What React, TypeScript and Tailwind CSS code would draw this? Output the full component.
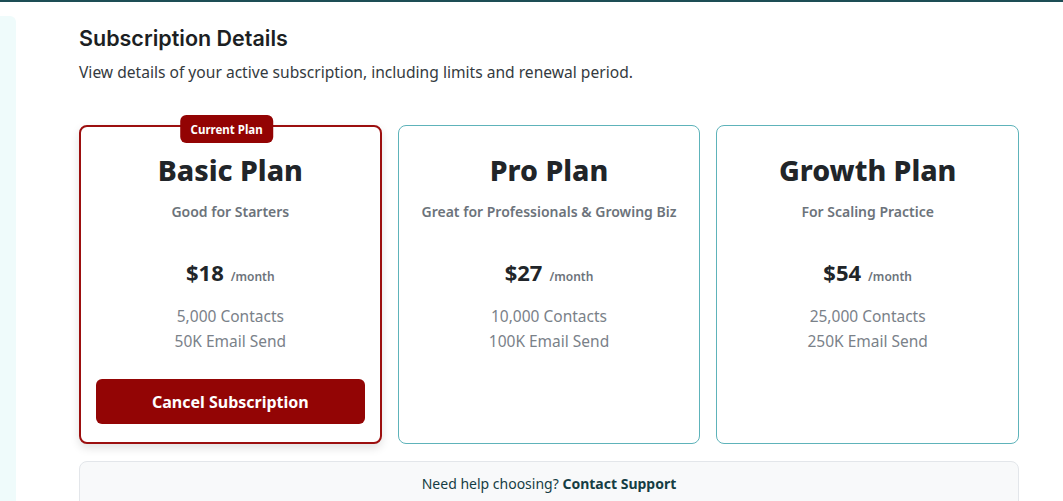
import React from "react";

interface Plan {
  name: string;
  tagline: string;
  price: number;
  contacts: string;
  emails: string;
  current?: boolean;
}

const plans: Plan[] = [
  { name: "Basic Plan", tagline: "Good for Starters", price: 18, contacts: "5,000 Contacts", emails: "50K Email Send", current: true },
  { name: "Pro Plan", tagline: "Great for Professionals & Growing Biz", price: 27, contacts: "10,000 Contacts", emails: "100K Email Send" },
  { name: "Growth Plan", tagline: "For Scaling Practice", price: 54, contacts: "25,000 Contacts", emails: "250K Email Send" },
];

const PlanCard: React.FC<{ plan: Plan }> = ({ plan }) => {
  return (
    <div
      className={
        plan.current
          ? "relative flex flex-col items-center rounded-lg border-2 border-[#9c0f0f] bg-white px-[15px] pt-[25px] pb-[18px] shadow-[0_4px_10px_rgba(0,0,0,0.12)]"
          : "relative flex flex-col items-center rounded-lg border border-[#5eb3ba] bg-white px-4 pt-[26px] pb-5"
      }
    >
      {/* badge sits on the top border */}
      {plan.current && (
        <span className="absolute -top-[12px] left-1/2 -translate-x-[54%] rounded-md bg-[#930303] px-[10px] h-[28px] leading-[29px] text-[11.5px] font-bold text-white">
          Current Plan
        </span>
      )}
      <h3 className="text-[28.5px] leading-9 font-extrabold text-[#212529]">{plan.name}</h3>
      <p className="mt-[14px] text-[14px] leading-5 font-semibold text-[#6c737b]">{plan.tagline}</p>
      <div className="mt-[34px] flex items-baseline gap-[7px] leading-8">
        <span className="text-[22px] font-bold text-[#212529]">${plan.price}</span>
        <span className="text-[12px] font-semibold text-[#6c737b]">/month</span>
      </div>
      <div className="mt-[11px] text-center text-[15.5px] leading-[25px] text-[#7a8189]">
        <div>{plan.contacts}</div>
        <div>{plan.emails}</div>
      </div>
      {plan.current && (
        <button
          type="button"
          className="mt-[25px] h-[45px] w-full rounded-md bg-[#930505] text-[16px] font-bold text-white"
        >
          Cancel Subscription
        </button>
      )}
    </div>
  );
};

export default function App() {
  return (
    <div className="min-h-[501px] bg-white font-['Noto_Sans','Open_Sans',sans-serif]">
      <div className="h-[2px] bg-[#1d4d55]" />
      <div className="flex">
        <div className="mt-[14px] w-4 h-[500px] shrink-0 rounded-tr-md bg-[#effbfb]" />
        <main className="flex-1 pl-[63px] pr-11 pt-[22px]">
          <h2 className="font-['Inter',sans-serif] text-[21.5px] leading-7 font-semibold text-[#1c1f23]">
            Subscription Details
          </h2>
          <p className="mt-[9px] text-[15.6px] leading-[22px] text-[#343a40]">
            View details of your active subscription, including limits and renewal period.
          </p>
          <div className="mt-[42px] grid grid-cols-3 gap-4">
            {plans.map(plan => (
              <PlanCard key={plan.name} plan={plan} />
            ))}
          </div>
          <div className="mt-[17px] rounded-lg border border-[#e3e6ea] bg-[#f8f9fa] pt-3 pb-4 text-center text-[14px] leading-5 text-[#153d44]">
            Need help choosing? <span className="font-bold">Contact Support</span>
          </div>
        </main>
      </div>
    </div>
  );
}
